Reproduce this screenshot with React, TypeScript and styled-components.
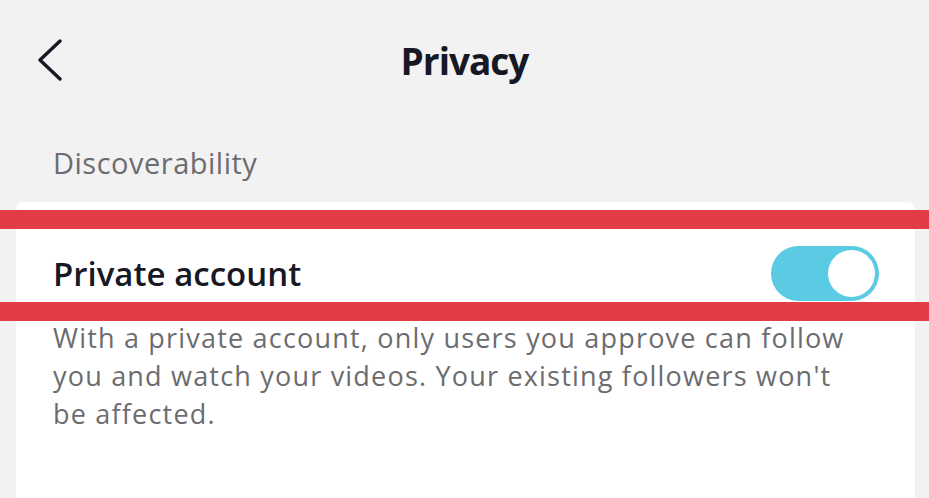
import React from 'react';
import styled, { createGlobalStyle } from 'styled-components';

const GlobalStyle = createGlobalStyle`
  html, body { margin: 0; padding: 0; background: #f2f2f2; }
  body { font-family: "Open Sans", Lato, "Liberation Sans", sans-serif; }
`;

/* ─── Layout ─────────────────────────────────────────────── */
const Page = styled.div`
  position: relative;
  width: 929px;
  height: 498px;
  overflow: hidden;
  background: #f2f2f2;
  display: flex;
  flex-direction: column;
`;

const Header = styled.header`
  height: 120px;
  flex-shrink: 0;
  display: grid;
  grid-template-columns: 1fr auto 1fr;
  align-items: center;
  padding: 0 36px;
`;

const BackBtn = styled.button`
  justify-self: start;
  width: 28px;
  height: 42px;
  padding: 0;
  border: none;
  background: none;
  display: flex;
  align-items: center;
  justify-content: center;
  color: #161823;
`;

const Title = styled.h1`
  margin: 0;
  font-size: 37px;
  font-weight: 700;
  letter-spacing: -1px;
  color: #161823;
`;

const SectionLabel = styled.div`
  flex-shrink: 0;
  height: 82px;
  box-sizing: border-box;
  padding: 23px 0 0 53px;
  font-size: 29px;
  letter-spacing: 0.5px;
  color: #6c6c70;
`;

const Card = styled.section`
  flex: 1;
  margin: 0 14px 0 16px;
  background: #fff;
  border-radius: 8px 8px 0 0;
  padding: 44px 36px 0 37px;
`;

const Row = styled.div`
  display: flex;
  align-items: center;
  justify-content: space-between;
  height: 55px;
`;

const RowLabel = styled.span`
  font-size: 33px;
  font-weight: 600;
  color: #161823;
`;

const Toggle = styled.div<{ $on: boolean }>`
  width: 108px;
  height: 55px;
  border-radius: 28px;
  background: ${({ $on }) => ($on ? '#5bcae3' : '#d6d6d6')};
  display: flex;
  align-items: center;
  justify-content: ${({ $on }) => ($on ? 'flex-end' : 'flex-start')};
  padding: 0 4px;
  box-sizing: border-box;
`;

const Knob = styled.span`
  width: 47px;
  height: 47px;
  border-radius: 50%;
  background: #fff;
`;

const Description = styled.p`
  margin: 18px 0 0;
  font-size: 27px;
  line-height: 38px;
  letter-spacing: 1.2px;
  color: #6c6c70;
  max-width: 810px;
`;

/* annotation bars drawn over the screenshot */
const Highlight = styled.div<{ $top: number }>`
  position: absolute;
  left: 0;
  right: 0;
  top: ${({ $top }) => $top}px;
  height: 19px;
  background: #e43c44;
`;

export default function App() {
  return (
    <Page>
      <GlobalStyle />
      <Header>
        <BackBtn aria-label="Back">
          <svg width="26" height="42" viewBox="0 0 26 42" fill="none">
            <path d="M23 2 L3 21 L23 40" stroke="currentColor" strokeWidth="3.4" strokeLinecap="round" strokeLinejoin="round" />
          </svg>
        </BackBtn>
        <Title>Privacy</Title>
        <span />
      </Header>

      <SectionLabel>Discoverability</SectionLabel>

      <Card>
        <Row>
          <RowLabel>Private account</RowLabel>
          <Toggle $on>
            <Knob />
          </Toggle>
        </Row>
        <Description>
          With a private account, only users you approve can follow you and watch your videos. Your existing followers won't be affected.
        </Description>
      </Card>

      <Highlight $top={210} />
      <Highlight $top={302} />
    </Page>
  );
}
